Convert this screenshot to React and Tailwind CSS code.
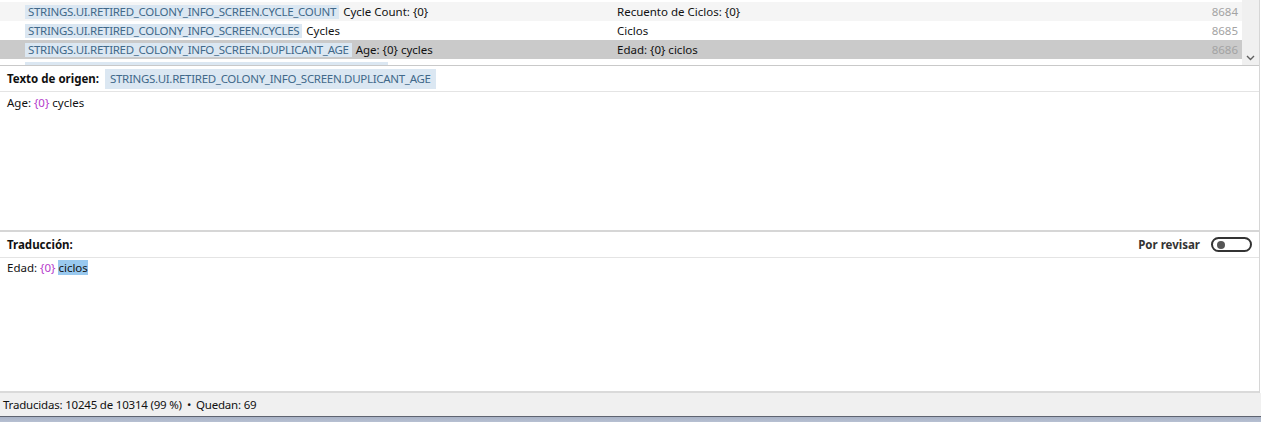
import React from 'react';

const rows = [
  { key: 'STRINGS.UI.RETIRED_COLONY_INFO_SCREEN.CYCLE_COUNT', src: 'Cycle Count: {0}', tr: 'Recuento de Ciclos: {0}', n: 8684, bg: 'bg-[#f5f5f5]' },
  { key: 'STRINGS.UI.RETIRED_COLONY_INFO_SCREEN.CYCLES', src: 'Cycles', tr: 'Ciclos', n: 8685, bg: 'bg-white' },
  { key: 'STRINGS.UI.RETIRED_COLONY_INFO_SCREEN.DUPLICANT_AGE', src: 'Age: {0} cycles', tr: 'Edad: {0} ciclos', n: 8686, bg: 'bg-[#cacaca]' },
  { key: 'STRINGS.UI.RETIRED_COLONY_INFO_SCREEN.PREVIEW_UNAVAILABLE', src: 'Preview Unavailable', tr: 'Vista Previa No Disponible', n: 8687, bg: 'bg-white' },
];

const Placeholder = () => <span className="text-[#b53ccc]">{'{0}'}</span>;

const StringRow = ({ row }) => (
  <div className={`flex items-center h-[19px] shrink-0 ${row.bg}`}>
    <div className="w-[617px] shrink-0 flex items-center pl-[25px] whitespace-nowrap overflow-hidden">
      <span className="bg-[#dbe7f2] text-[#41698a] px-[3px] leading-[14px] tracking-[-0.3px]">{row.key}</span>
      <span className="ml-[4px] text-[#111]">{row.src}</span>
    </div>
    <div className="flex-1 whitespace-nowrap text-[#111]">{row.tr}</div>
    <div className="w-[60px] text-right pr-[4px] text-[#a3a3a3]">{row.n}</div>
  </div>
);

export default function App() {
  return (
    <div className="w-[1261px] h-[422px] flex flex-col bg-white text-[11.5px] text-[#111] overflow-hidden" style={{ fontFamily: '"Noto Sans", sans-serif' }}>
      <div className="flex-1 flex flex-col w-[1260px] border-r border-[#d6d6d6] min-h-0">
        {/* list */}
        <div className="h-[66px] shrink-0 flex border-b border-[#c9c9c9] overflow-hidden">
          <div className="flex-1 flex flex-col pt-[2px] overflow-hidden">
            {rows.map((r) => (
              <StringRow key={r.n} row={r} />
            ))}
          </div>
          <div className="w-[17px] bg-[#f0f0f0] flex flex-col justify-end items-center pb-[4px]">
            <svg width="9" height="6" viewBox="0 0 9 6">
              <path d="M1 1l3.5 3.5L8 1" fill="none" stroke="#606060" strokeWidth="1.4" />
            </svg>
          </div>
        </div>

        {/* source */}
        <div className="h-[26px] shrink-0 flex items-center px-[7px] border-b border-[#e4e4e4]">
          <span className="font-bold text-[#111]">Texto de origen:</span>
          <span className="ml-[6px] bg-[#dbe7f2] text-[#41698a] px-[5px] h-[20px] flex items-center tracking-[-0.3px]">STRINGS.UI.RETIRED_COLONY_INFO_SCREEN.DUPLICANT_AGE</span>
        </div>
        <div className="flex-1 px-[7px] pt-[2px] border-b-2 border-[#d6d6d6]">
          Age: <Placeholder /> cycles
        </div>

        {/* translation */}
        <div className="h-[26px] shrink-0 flex items-center px-[7px] border-b border-[#e4e4e4]">
          <span className="font-bold text-[#111]">Traducción:</span>
          <span className="ml-auto font-bold text-[#333]">Por revisar</span>
          <div className="ml-[11px] w-[41px] h-[15px] rounded-full border-2 border-[#333] flex items-center pl-[4px]">
            <div className="w-[8px] h-[8px] rounded-full bg-[#555]" />
          </div>
        </div>
        <div className="h-[135px] shrink-0 px-[7px] pt-[1px] border-b-2 border-[#dadada]">
          Edad: <Placeholder /> <span className="bg-[#99c9ef]">ciclos</span>
        </div>
      </div>

      {/* status bar */}
      <div className="h-[23px] shrink-0 bg-[#f0f0f0] flex items-center px-[3px] text-[#111] whitespace-pre tracking-[-0.2px]">
        Traducidas: 10245 de 10314 (99 %)<span className="mx-[5px]">•</span>Quedan: 69
      </div>
      <div className="h-[6px] shrink-0 border-t border-[#5f6470] bg-gradient-to-b from-[#a9b3c6] to-[#b7c0d2]" />
    </div>
  );
}
